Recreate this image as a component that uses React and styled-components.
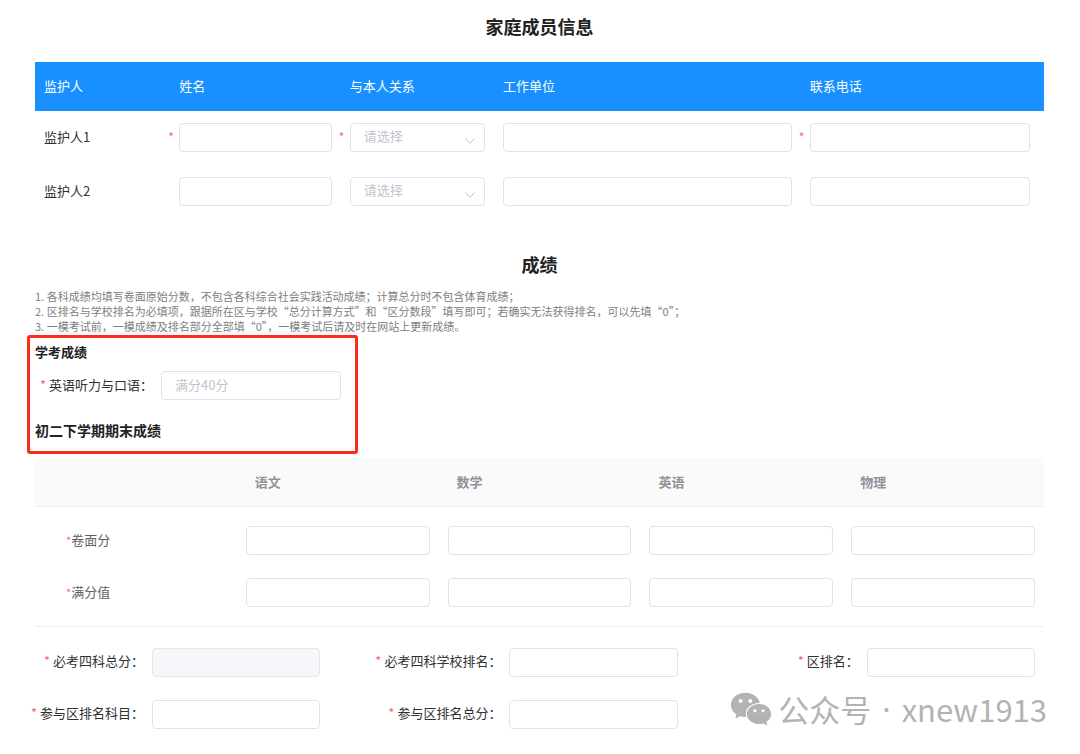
import React from "react";
import styled, { createGlobalStyle } from "styled-components";
import { AiFillWechat } from "react-icons/ai";

const guardians = [
  { name: "监护人1", required: true },
  { name: "监护人2", required: false },
];

const subjects = ["语文", "数学", "英语", "物理"];
const scoreRows = ["卷面分", "满分值"];

const rankFields = [
  { id: "total", label: "必考四科总分", disabled: true },
  { id: "schoolRank", label: "必考四科学校排名" },
  { id: "areaRank", label: "区排名" },
  { id: "areaSubjects", label: "参与区排名科目" },
  { id: "areaTotal", label: "参与区排名总分" },
];

const GuardianRow = ({ name, required }) => (
  <tr>
    <th scope="row">{name}</th>
    <td>
      <Cell>
        <Mark>{required && "*"}</Mark>
        <Input aria-label={`${name} 姓名`} />
      </Cell>
    </td>
    <td>
      <Cell>
        <Mark>{required && "*"}</Mark>
        <SelectBox>
          <Select aria-label={`${name} 与本人关系`} defaultValue="">
            <option value="">请选择</option>
            <option value="father">父亲</option>
            <option value="mother">母亲</option>
          </Select>
          <Chevron viewBox="0 0 12 12" aria-hidden="true">
            <path d="M1.5 3.5 6 8.5l4.5-5" />
          </Chevron>
        </SelectBox>
      </Cell>
    </td>
    <td>
      <Cell>
        <Mark />
        <Input aria-label={`${name} 工作单位`} />
      </Cell>
    </td>
    <td>
      <Cell>
        <Mark>{required && "*"}</Mark>
        <Input type="tel" aria-label={`${name} 联系电话`} />
      </Cell>
    </td>
  </tr>
);

const App = () => {
  return (
    <Page>
      <GlobalStyle />
      <Title>家庭成员信息</Title>
      <GuardianTable>
        <thead>
          <tr>
            <th>监护人</th>
            <th>姓名</th>
            <th>与本人关系</th>
            <th>工作单位</th>
            <th>联系电话</th>
          </tr>
        </thead>
        <tbody>
          {guardians.map((item) => (
            <GuardianRow key={item.name} {...item} />
          ))}
        </tbody>
      </GuardianTable>

      <ScoreTitle>成绩</ScoreTitle>
      <Notes>
        <p>
          1. 各科成绩均填写卷面原始分数，不包含各科综合社会实践活动成绩；计算总分时不包含体育成绩；
        </p>
        <p>
          2. 区排名与学校排名为必填项，跟据所在区与学校“总分计算方式”和“区分数段”填写即可；若确实无法获得排名，可以先填“0”；
        </p>
        <p>
          3. 一模考试前，一模成绩及排名部分全部填“0”，一模考试后请及时在网站上更新成绩。
        </p>
      </Notes>

      <Highlight>
        <SmallTitle>学考成绩</SmallTitle>
        <ListeningField>
          <Label htmlFor="listening">
            <Star>*</Star>英语听力与口语：
          </Label>
          <Input id="listening" placeholder="满分40分" />
        </ListeningField>
        <TermTitle>初二下学期期末成绩</TermTitle>
      </Highlight>

      <ScoreTable>
        <thead>
          <tr>
            <td />
            {subjects.map((subject) => (
              <th key={subject}>{subject}</th>
            ))}
          </tr>
        </thead>
        <tbody>
          {scoreRows.map((row) => (
            <tr key={row}>
              <th scope="row">
                <SmallStar>*</SmallStar>
                {row}
              </th>
              {subjects.map((subject) => (
                <td key={subject}>
                  <Input aria-label={`${subject} ${row}`} />
                </td>
              ))}
            </tr>
          ))}
        </tbody>
      </ScoreTable>

      <RankGrid>
        {rankFields.map(({ id, label, disabled }) => (
          <React.Fragment key={id}>
            <Label htmlFor={id}>
              <Star>*</Star>
              {label}：
            </Label>
            <Input id={id} disabled={disabled} />
          </React.Fragment>
        ))}
      </RankGrid>

      <Watermark>
        <AiFillWechat size={46} />
        <Account>
          <span>公众号</span>
          <Dot>·</Dot>
          <span>xnew1913</span>
        </Account>
      </Watermark>
    </Page>
  );
};

const GlobalStyle = createGlobalStyle`
  * {
    box-sizing: border-box;
  }
  body {
    margin: 0;
    background: #fff;
    color: #303133;
    font-family: "Noto Sans CJK SC", sans-serif;
    font-size: 13px;
    line-height: 20px;
  }
  input,
  select {
    font: inherit;
  }
`;

const Page = styled.main`
  position: relative;
  padding: 13px 36px 25px 35px;
`;

const Title = styled.h2`
  margin: 0;
  font-size: 18px;
  line-height: 26px;
  font-weight: 700;
  text-align: center;
  color: #222;
`;

const ScoreTitle = styled(Title)`
  margin: 32px 0 12px;
`;

const Input = styled.input`
  display: block;
  width: 100%;
  min-width: 0;
  height: 29px;
  padding: 0 13px 2px;
  border: 1px solid #dfe2ea;
  border-radius: 4px;
  background: #fff;
  color: #606266;
  outline: none;

  &::placeholder {
    color: #c0c4cc;
  }
  &:disabled {
    background: #f5f7fa;
    border-color: #e4e7ed;
  }
`;

const Cell = styled.div`
  display: flex;
  align-items: center;
`;

const Mark = styled.span`
  flex: 0 0 18px;
  padding-left: 7px;
  font-size: 12px;
  color: #f56c6c;
`;

const SelectBox = styled.div`
  position: relative;
  flex: 1;
`;

const Select = styled.select`
  display: block;
  width: 100%;
  height: 29px;
  padding: 0 30px 2px 13px;
  border: 1px solid #dfe2ea;
  border-radius: 4px;
  background: #fff;
  color: #c0c4cc;
  appearance: none;
  outline: none;
`;

const Chevron = styled.svg`
  position: absolute;
  right: 9px;
  top: 12px;
  width: 12px;
  height: 12px;
  fill: none;
  stroke: #c0c4cc;
  pointer-events: none;
`;

const GuardianTable = styled.table`
  width: 100%;
  margin-top: 23px;
  table-layout: fixed;
  border-collapse: collapse;

  th,
  td {
    padding: 0 0 2px;
    font-weight: 400;
    text-align: left;
  }
  thead th {
    height: 49px;
    padding-left: 18px;
    background: #1890ff;
    color: #fff;
  }
  thead th:nth-child(1) {
    width: 12.5%;
  }
  thead th:nth-child(2) {
    width: 16.9%;
  }
  thead th:nth-child(3) {
    width: 15.2%;
  }
  thead th:nth-child(4) {
    width: 30.4%;
  }
  tbody tr {
    height: 54px;
  }
  tr th:first-child {
    padding-left: 9px;
  }
  td:last-child {
    padding-right: 14px;
  }
`;

const Notes = styled.div`
  font-size: 11px;
  line-height: 15px;
  color: #808080;

  p {
    margin: 0;
  }
`;

const Highlight = styled.section`
  width: fit-content;
  margin: 1px 0 4px -8px;
  padding: 4px 14px 10px 5px;
  border: 3px solid #fe2a1c;
  border-radius: 3px;
`;

const SmallTitle = styled.h4`
  margin: 0 0 9px;
  font-size: 13px;
  line-height: 20px;
  font-weight: 700;
  color: #222;
`;

const TermTitle = styled.h3`
  margin: 19px 0 0;
  font-size: 14px;
  line-height: 22px;
  font-weight: 700;
  color: #222;
`;

const ListeningField = styled.div`
  display: flex;
  align-items: center;
  padding-left: 5px;

  input {
    width: 180px;
  }
`;

const Label = styled.label`
  padding: 0 8px 2px 0;
  text-align: right;
  white-space: nowrap;
`;

const Star = styled.span`
  margin-right: 3px;
  color: #f56c6c;
`;

const SmallStar = styled(Star)`
  margin-right: 0;
  font-size: 11px;
`;

const ScoreTable = styled.table`
  width: 100%;
  table-layout: fixed;
  border-collapse: collapse;
  border-bottom: 1px solid #ebeef5;

  th,
  td {
    padding: 0 9px;
    text-align: left;
  }
  thead tr {
    height: 48px;
    background: #fafafa;
    border-bottom: 1px solid #ebeef5;
  }
  thead th {
    padding-left: 18px;
    color: #909399;
    font-weight: 700;
  }
  tbody tr {
    height: 52px;
  }
  tbody th {
    padding-left: 31px;
    font-weight: 400;
    color: #606266;
  }
  tbody::before,
  tbody::after {
    content: "";
    display: table-row;
    height: 8px;
  }
`;

const RankGrid = styled.div`
  display: grid;
  grid-template-columns: 125fr 168fr 189fr 168fr 189fr 168fr;
  row-gap: 23px;
  align-items: center;
  margin: 21px 9px 0 -8px;
`;

const Watermark = styled.div`
  position: absolute;
  right: 33px;
  bottom: 22px;
  display: flex;
  align-items: center;
  gap: 4px;
  font-size: 31px;
  line-height: 40px;
  color: #b3b3b3;
  pointer-events: none;
`;

const Account = styled.div`
  display: flex;
  gap: 11px;
`;

const Dot = styled.span`
  font-family: "Noto Sans", sans-serif;
`;

export default App;
